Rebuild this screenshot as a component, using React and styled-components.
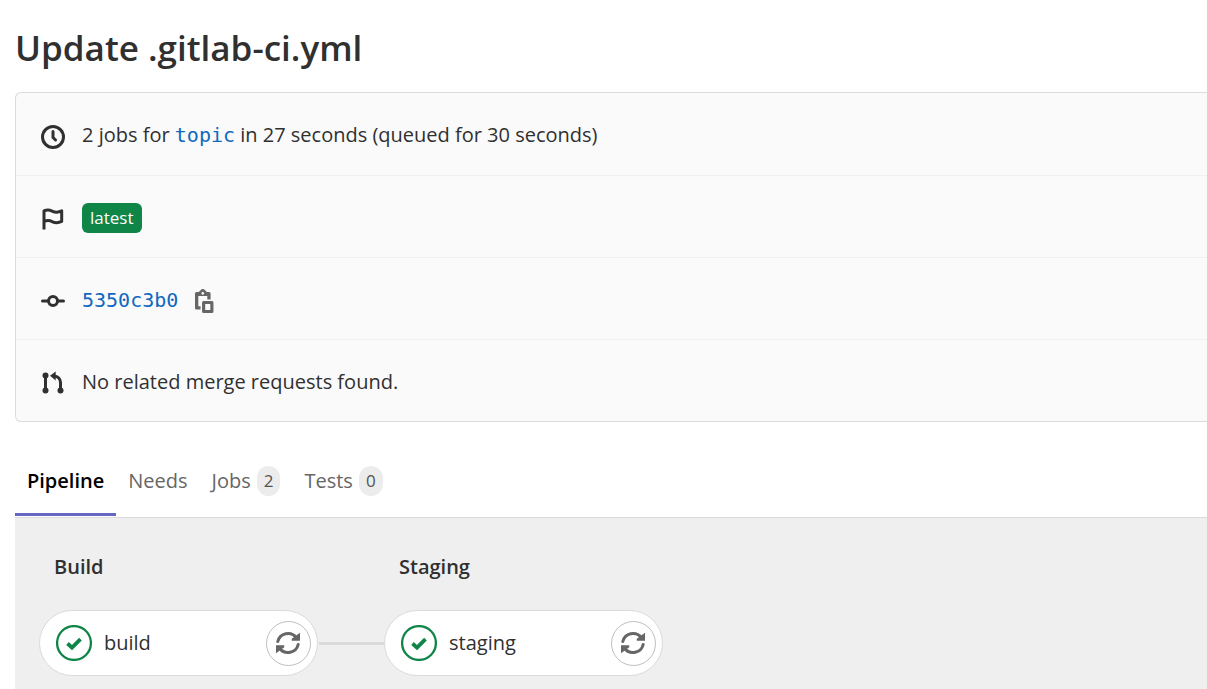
import React, { useState } from "react";
import styled, { createGlobalStyle } from "styled-components";

const GlobalStyle = createGlobalStyle`
  *, *::before, *::after { box-sizing: border-box; }
  body {
    margin: 0;
    background: #fff;
    color: #303030;
    font: 400 20px/30px "Open Sans", "Noto Sans", sans-serif;
    overflow-x: hidden;
  }
  button { font: inherit; }
`;

const Page = styled.main`
  padding: 20px 0 0 15px;
`;

const Title = styled.h1`
  margin: 0 0 16px;
  font-size: 35px;
  line-height: 56px;
  font-weight: 600;
`;

const InfoBox = styled.section`
  border: 1px solid #dbdbdb;
  border-right: 0;
  border-radius: 6px 0 0 6px;
  background: #fafafa;
`;

const InfoRow = styled.div`
  display: flex;
  align-items: center;
  gap: 17px;
  min-height: 82px;
  padding: 2px 25px 0;

  & + & { border-top: 1px solid #f0f0f0; }
`;

const Icon = styled.svg`
  flex: none;
  width: 24px;
  height: 24px;
  fill: none;
  stroke: currentColor;
  stroke-width: 2;

  ${InfoRow} & { margin-top: 3px; }
`;

const RefLink = styled.a`
  color: #1068bf;
  font-family: "DejaVu Sans Mono", monospace;
  text-decoration: none;
`;

const Badge = styled.span`
  padding: 0 8px;
  border-radius: 6px;
  background: #108548;
  color: #fff;
  font-size: 17px;
`;

const CopyButton = styled.button`
  display: flex;
  padding: 0;
  border: 0;
  background: none;
  color: #666;
`;

const Tabs = styled.div`
  display: flex;
  margin-top: 36px;
  border-bottom: 1px solid #dbdbdb;
`;

const Tab = styled.button`
  display: flex;
  align-items: flex-start;
  gap: 6px;
  height: 59px;
  padding: 8px 12px 0;
  border: 0;
  background: none;
  color: ${(p) => (p.$active ? "#000" : "#666")};
  font-weight: ${(p) => (p.$active ? 600 : 400)};
  box-shadow: ${(p) => (p.$active ? "inset 0 -1px #fff, inset 0 -4px #6666c4" : "none")};
`;

const Count = styled.span`
  padding: 0 7px;
  border-radius: 15px;
  background: #ececec;
  color: #525252;
  font-size: 17px;
`;

const Graph = styled.section`
  display: flex;
  gap: 66px;
  padding: 34px 24px 13px;
  background: #efefef;
`;

const Stage = styled.div`
  width: 279px;
`;

const StageName = styled.h2`
  margin: 0 0 28px;
  padding: 0 15px;
  font-size: 20px;
  line-height: 30px;
  font-weight: 600;
`;

const Job = styled.div`
  position: relative;
  display: flex;
  align-items: center;
  gap: 12px;
  height: 66px;
  padding: 0 6px 0 16px;
  border: 1px solid #dbdbdb;
  border-radius: 33px;
  background: #fff;

  ${Stage} + ${Stage} &::before {
    content: "";
    position: absolute;
    right: 100%;
    width: 66px;
    height: 3px;
    background: #dbdbdb;
  }
`;

const StatusIcon = styled.svg`
  flex: none;
  width: 36px;
  height: 36px;
  fill: none;
  stroke: #108548;
`;

const JobName = styled.span`
  flex: 1;
`;

const RetryButton = styled.button`
  display: flex;
  align-items: center;
  justify-content: center;
  width: 45px;
  height: 45px;
  padding: 0 1px 1px 0;
  border: 1px solid #bfbfbf;
  border-radius: 50%;
  background: #fff;
  color: #666;
`;

const ClockIcon = () => (
  <Icon viewBox="0 0 16 16" aria-hidden="true">
    <circle cx="8" cy="8" r="7" />
    <path d="M8 4.400v3.900l1.700 1.700" strokeLinecap="round" strokeLinejoin="round" />
  </Icon>
);

const FlagIcon = () => (
  <Icon viewBox="0 0 16 16" aria-hidden="true">
    <path d="M2 15V2.6c1.8-.8 3.6-.8 5.4.1 2.200 1.100 4.200 1 6.400-.1v7c-2.200 1.100-4.200 1.200-6.400.1C5.600 8.800 3.800 8.900 2 9.700" strokeLinejoin="round" />
  </Icon>
);

const CommitIcon = () => (
  <Icon viewBox="0 0 16 16" aria-hidden="true">
    <circle cx="8" cy="8" r="3" />
    <path d="M1 8h4M11 8h4" strokeLinecap="round" />
  </Icon>
);

const MergeIcon = () => (
  <Icon viewBox="0 0 16 16" aria-hidden="true">
    <path d="M3 3v10M13 13V7.500a4 4 0 0 0-4-4" />
    <g fill="currentColor" stroke="none">
      <circle cx="3" cy="3" r="2" />
      <circle cx="3" cy="13" r="2" />
      <circle cx="13" cy="13" r="2" />
      <path d="M6 3.200L9.800.4v6z" />
    </g>
  </Icon>
);

const CopyIcon = () => (
  <Icon viewBox="0 0 16 16" aria-hidden="true">
    <g fill="currentColor" stroke="none" fillRule="evenodd">
      <path d="M1 2h1.500l1.200-1.200A1.800 1.800 0 0 1 5.200 0a1.800 1.800 0 0 1 1.500.8L7.900 2h1.500a1 1 0 0 1 1 1v4H8.200V4.700H2.200v6.800h1.500v2.200H1a1 1 0 0 1-1-1V3a1 1 0 0 1 1-1zM5.200 2a.9.9 0 1 0 0 1.800.9.9 0 0 0 0-1.800z" />
      <path d="M5.700 8h5.600a1 1 0 0 1 1 1v6a1 1 0 0 1-1 1H5.700a1 1 0 0 1-1-1V9a1 1 0 0 1 1-1zM6.800 10v4h3.400v-4z" />
    </g>
  </Icon>
);

const RetryIcon = () => (
  <Icon viewBox="0 0 16 16" aria-hidden="true">
    <path d="M1.200 7A7 7 0 0 1 13.500 4.300M14.800 9A7 7 0 0 1 2.500 11.700" strokeLinecap="round" />
    <path d="M16 1.100v5.400h-5.500V5.200zM0 14.900V9.500h5.500v1.300z" fill="currentColor" stroke="none" />
  </Icon>
);

const stages = [
  { name: "Build", job: "build" },
  { name: "Staging", job: "staging" },
];

const tabs = [
  { name: "Pipeline" },
  { name: "Needs" },
  { name: "Jobs", count: 2 },
  { name: "Tests", count: 0 },
];

export default function App() {
  const [active, setActive] = useState("Pipeline");
  return (
    <Page>
      <GlobalStyle />
      <Title>Update .gitlab-ci.yml</Title>
      <InfoBox>
        <InfoRow>
          <ClockIcon />
          <span>
            2 jobs for <RefLink href="#topic">topic</RefLink> in 27 seconds (queued for 30 seconds)
          </span>
        </InfoRow>
        <InfoRow>
          <FlagIcon />
          <Badge>latest</Badge>
        </InfoRow>
        <InfoRow>
          <CommitIcon />
          <RefLink href="#commit">5350c3b0</RefLink>
          <CopyButton type="button" aria-label="Copy commit SHA">
            <CopyIcon />
          </CopyButton>
        </InfoRow>
        <InfoRow>
          <MergeIcon />
          <span>No related merge requests found.</span>
        </InfoRow>
      </InfoBox>
      <Tabs role="tablist">
        {tabs.map(({ name, count }) => (
          <Tab
            key={name}
            type="button"
            role="tab"
            aria-selected={active === name}
            $active={active === name}
            onClick={() => setActive(name)}
          >
            {name}
            {count !== undefined && <Count>{count}</Count>}
          </Tab>
        ))}
      </Tabs>
      <Graph>
        {stages.map(({ name, job }) => (
          <Stage key={name}>
            <StageName>{name}</StageName>
            <Job>
              <StatusIcon viewBox="0 0 36 36" aria-hidden="true">
                <circle cx="18" cy="18" r="16.900" strokeWidth="2.300" />
                <path d="M11.500 18.500l4.500 4.200 8.500-8.500" strokeWidth="3.800" />
              </StatusIcon>
              <JobName>{job}</JobName>
              <RetryButton type="button" aria-label={`Retry ${job}`}>
                <RetryIcon />
              </RetryButton>
            </Job>
          </Stage>
        ))}
      </Graph>
    </Page>
  );
}
